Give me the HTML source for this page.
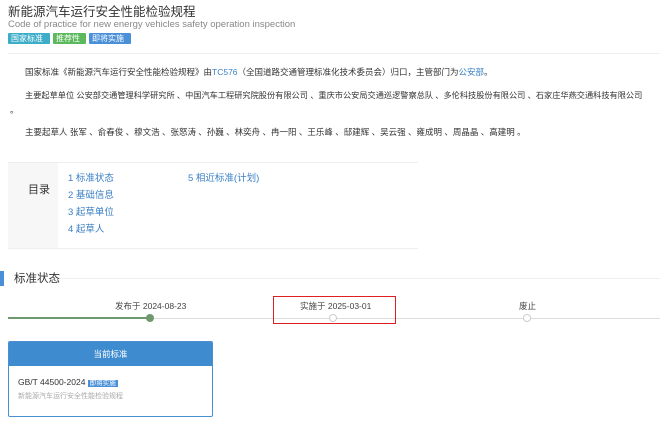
<!DOCTYPE html>
<html><head><meta charset="utf-8"><style>
*{margin:0;padding:0;box-sizing:border-box}
body{width:660px;height:424px;background:#fff;font-family:"Liberation Sans","Noto Sans CJK SC",sans-serif;color:#333;position:relative;overflow:hidden;line-height:1.15}
.a{position:absolute;white-space:nowrap}
.tag{position:absolute;top:33px;height:11px;font-size:8px;color:#fff;line-height:11px;padding:0 3px;border-radius:1px}
.p{font-size:8.5px;color:#333;left:25px}
.lk{color:#3a7fc4}
.toc{font-size:9.5px;color:#3a7fc4}
</style></head><body>
<div class="a" style="left:8px;top:5px;font-size:12.5px;color:#333">新能源汽车运行安全性能检验规程</div>
<div class="a" style="left:8px;top:20px;font-size:9.5px;color:#888">Code of practice for new energy vehicles safety operation inspection</div>
<div class="tag" style="left:8px;width:42px;background:#3dadc8">国家标准</div>
<div class="tag" style="left:53px;width:33px;background:#5cb85c">推荐性</div>
<div class="tag" style="left:89px;width:42px;background:#4a90d9">即将实施</div>
<div class="a" style="left:8px;top:53px;width:652px;height:1px;background:#eee"></div>
<div class="a p" style="top:68px">国家标准《新能源汽车运行安全性能检验规程》由<span class="lk">TC576</span>（全国道路交通管理标准化技术委员会）归口，主管部门为<span class="lk">公安部</span>。</div>
<div class="a p" style="top:91px;font-size:8.2px">主要起草单位 公安部交通管理科学研究所 、中国汽车工程研究院股份有限公司 、重庆市公安局交通巡逻警察总队 、多伦科技股份有限公司 、石家庄华燕交通科技有限公司</div>
<div class="a" style="left:10px;top:106px;font-size:8.5px">。</div>
<div class="a p" style="top:128px">主要起草人 张军 、俞春俊 、穆文浩 、张怒涛 、孙巍 、林奕舟 、冉一阳 、王乐峰 、邸建辉 、吴云强 、雍成明 、周晶晶 、高建明 。</div>
<div class="a" style="left:8px;top:162px;width:410px;height:1px;background:#eee"></div>
<div class="a" style="left:8px;top:248px;width:410px;height:1px;background:#eee"></div>
<div class="a" style="left:8px;top:163px;width:50px;height:85px;background:#f7f7f7"></div>
<div class="a" style="left:28px;top:184px;font-size:11px;color:#333">目录</div>
<div class="a toc" style="left:68px;top:174px">1 标准状态</div>
<div class="a toc" style="left:68px;top:191px">2 基础信息</div>
<div class="a toc" style="left:68px;top:208px">3 起草单位</div>
<div class="a toc" style="left:68px;top:225px">4 起草人</div>
<div class="a toc" style="left:188px;top:174px">5 相近标准(计划)</div>
<div class="a" style="left:0;top:271px;width:4px;height:15px;background:#4a90d9"></div>
<div class="a" style="left:14px;top:273px;font-size:11.5px;color:#333">标准状态</div>
<div class="a" style="left:62px;top:278px;width:598px;height:1px;background:#eee"></div>
<div class="a" style="left:8px;top:318px;width:652px;height:1px;background:#ddd"></div>
<div class="a" style="left:8px;top:317px;width:142px;height:2px;background:#6e9a6e"></div>
<div class="a" style="left:146px;top:314px;width:8px;height:8px;border-radius:50%;background:#6e9a6e"></div>
<div class="a" style="left:329px;top:314px;width:8px;height:8px;border-radius:50%;background:#fff;border:1px solid #ccc"></div>
<div class="a" style="left:523px;top:314px;width:8px;height:8px;border-radius:50%;background:#fff;border:1px solid #ccc"></div>
<div class="a" style="left:115px;top:302px;font-size:8.5px;color:#444">发布于 2024-08-23</div>
<div class="a" style="left:300px;top:302px;font-size:8.5px;color:#444">实施于 2025-03-01</div>
<div class="a" style="left:519px;top:302px;font-size:8.5px;color:#444">废止</div>
<div class="a" style="left:273px;top:296px;width:123px;height:28px;border:1.5px solid #e02020"></div>
<div class="a" style="left:8px;top:341px;width:205px;height:76px;border:1px solid #4a8fd0;border-radius:2px;overflow:hidden">
 <div style="height:24px;background:#3f8bd0;color:#fff;font-size:8.5px;text-align:center;line-height:24px">当前标准</div>
 <div class="a" style="left:9px;top:36px;font-size:8.5px;color:#333">GB/T 44500-2024 <span style="background:#4a90d9;color:#fff;font-size:6.5px;padding:0 2px">即将实施</span></div>
 <div class="a" style="left:9px;top:51px;font-size:7px;color:#aaa">新能源汽车运行安全性能检验规程</div>
</div>
</body></html>
